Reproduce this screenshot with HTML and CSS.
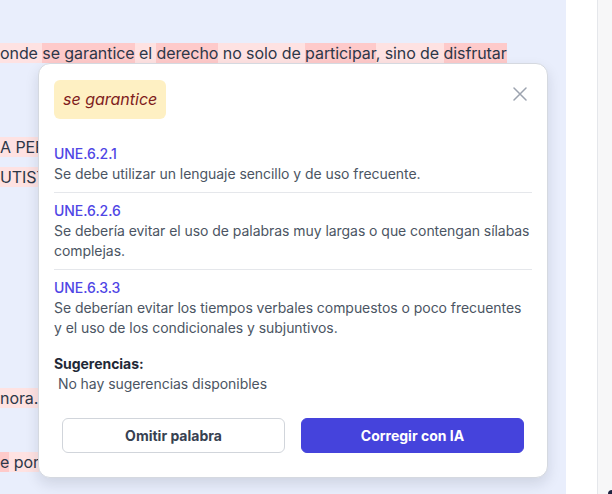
FILE: index.html
```html
<!DOCTYPE html>
<html lang="es">
<head>
<meta charset="utf-8">
<title>Revisión</title>
<link rel="stylesheet" href="styles.css">
</head>
<body>
<div class="app">
  <main class="editor">
    <div class="doc">
      <p class="para para-a"><span class="hl">onde <mark class="err">se garantice</mark> el <mark class="err">derecho</mark> no solo de <mark class="err">participar</mark>, sino de <mark class="err">disfrutar</mark></span></p>
      <p class="para para-b"><span class="hl">A PERS</span><br><span class="hl">UTISTA</span></p>
      <p class="para para-c"><span class="hl">nora.</span></p>
      <p class="para para-d"><span class="hl"><mark class="err">e</mark> por</span></p>
    </div>

    <section class="popup">
      <header class="popup-head">
        <span class="tag">se garantice</span>
        <button class="close" aria-label="Cerrar">
          <svg width="14" height="14" viewBox="0 0 14 14"><path d="M1 1 L13 13 M13 1 L1 13" stroke="#9ca3af" stroke-width="1.5" fill="none" stroke-linecap="round"/></svg>
        </button>
      </header>
      <ul class="rules">
        <li class="rule">
          <div class="rule-code">UNE.6.2.1</div>
          <div class="rule-text">Se debe utilizar un lenguaje sencillo y de uso frecuente.</div>
        </li>
        <li class="rule">
          <div class="rule-code">UNE.6.2.6</div>
          <div class="rule-text">Se debería evitar el uso de palabras muy largas o que contengan sílabas complejas.</div>
        </li>
        <li class="rule">
          <div class="rule-code">UNE.6.3.3</div>
          <div class="rule-text">Se deberían evitar los tiempos verbales compuestos o poco frecuentes y el uso de los condicionales y subjuntivos.</div>
        </li>
      </ul>
      <div class="suggest">
        <div class="suggest-title">Sugerencias:</div>
        <div class="suggest-text"> No hay sugerencias disponibles</div>
      </div>
      <div class="actions">
        <button class="btn btn-outline">Omitir palabra</button>
        <button class="btn btn-primary">Corregir con IA</button>
      </div>
    </section>
  </main>
  <div class="gutter"></div>
  <aside class="sidebar"></aside>
</div>
</body>
</html>
```

FILE: styles.css
```css
* { box-sizing: border-box; }
html, body { margin: 0; padding: 0; }
body {
  width: 612px;
  height: 494px;
  overflow: hidden;
  font-family: Inter, "Noto Sans", sans-serif;
}
.app {
  display: flex;
  height: 494px;
}
.editor {
  position: relative;
  flex: 0 0 566px;
  background: #e9eefc;
  overflow: hidden;
}
.doc {
  padding-top: 38px;
  color: #2d3748;
  font-size: 16px;
  line-height: 30px;
  letter-spacing: -0.075px;
  white-space: nowrap;
}
.para { margin: 0; }
.para-b { margin-top: 64px; }
.para-c { margin-top: 191px; }
.para-d { margin-top: 34px; }
.hl { background: #fee2e2; }
.err { background: #fecaca; color: inherit; }

.popup {
  position: absolute;
  left: 38px;
  top: 63px;
  width: 510px;
  height: 415px;
  background: #fff;
  border: 1px solid #d5d9e0;
  border-radius: 12px;
  box-shadow: 0 6px 14px rgba(15, 23, 42, 0.12);
  padding: 16px 15px 24px;
  letter-spacing: -0.05px;
}
.popup-head {
  display: flex;
  justify-content: space-between;
  align-items: flex-start;
}
.tag {
  display: inline-block;
  background: #fef0c3;
  color: #7f1d1d;
  font-style: italic;
  font-size: 16px;
  line-height: 21px;
  padding: 9px 9px;
  border-radius: 6px;
  letter-spacing: 0;
}
.close {
  width: 24px;
  height: 24px;
  margin-top: 2px;
  padding: 0;
  border: 0;
  background: none;
  display: flex;
  align-items: center;
  justify-content: center;
}
.rules {
  list-style: none;
  margin: 17px 0 0;
  padding: 0;
}
.rule {
  padding: 8px 0;
  border-bottom: 1px solid #e5e7eb;
  font-size: 14px;
  line-height: 20px;
}
.rule:last-child { border-bottom: 0; }
.rule-code { color: #4f46e5; font-weight: 500; }
.rule-text { color: #4b5563; }
.suggest {
  margin-top: 8px;
  font-size: 14px;
  line-height: 20px;
}
.suggest-title { font-weight: 700; color: #1f2937; }
.suggest-text { color: #4b5563; white-space: pre; }
.actions {
  display: flex;
  gap: 16px;
  padding: 0 8px;
  margin-top: 24px;
}
.btn {
  flex: 1;
  height: 35px;
  border-radius: 6px;
  font-family: Inter, "Noto Sans", sans-serif;
  font-size: 14px;
  font-weight: 700;
}
.btn-outline {
  background: #fff;
  border: 1px solid #d1d5db;
  color: #374151;
}
.btn-primary {
  background: #4543dc;
  border: 1px solid #4543dc;
  color: #fff;
}
.gutter {
  flex: 0 0 32px;
  background: #fff;
  border-right: 1px solid #e5e7eb;
}
.sidebar {
  position: relative;
  flex: 1;
  background: #f7f7f8;
}
.sidebar::after {
  content: "";
  position: absolute;
  right: -4px;
  bottom: -4px;
  width: 8px;
  height: 8px;
  border-radius: 50%;
  background: #1e2340;
}
```
